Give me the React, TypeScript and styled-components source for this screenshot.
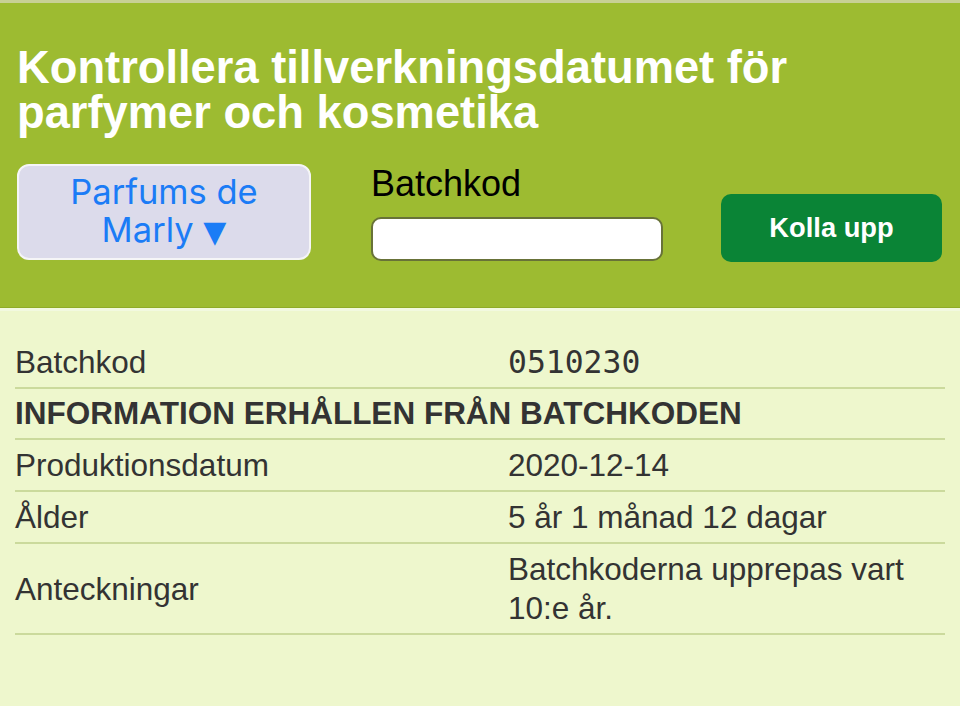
import React from 'react';
import styled, { createGlobalStyle } from 'styled-components';

const GlobalStyle = createGlobalStyle`
  html, body {
    margin: 0;
    padding: 0;
    background-color: #eef7cd;
  }
  body {
    font-family: "Liberation Sans", Arial, sans-serif;
    color: #333333;
  }
`;

const Page = styled.div`
  min-height: 706px;
  background-color: #eef7cd;
`;

const Header = styled.header`
  background-color: #9dbb31;
  border-top: 3px solid #c8d096;
  border-bottom: 1px solid #8fab28;
  padding: 42px 18px 47px 17px;
`;

const Title = styled.h1`
  margin: 0 0 28px 0;
  font-size: 45.3px;
  line-height: 45px;
  font-weight: bold;
  color: #ffffff;
`;

const FormRow = styled.div`
  display: flex;
  align-items: flex-end;
`;

const BrandSelect = styled.button`
  width: 294px;
  height: 96px;
  margin-right: 60px;
  background-color: #dcdbeb;
  border: 2px solid #f5f5f7;
  border-radius: 12px;
  color: #1b7cf6;
  font-family: Inter, "Liberation Sans", sans-serif;
  font-size: 34.5px;
  line-height: 38px;
  text-align: center;
  padding: 0 16px;
  cursor: pointer;
`;

const Caret = styled.span`
  font-family: "DejaVu Sans", sans-serif;
  font-size: 30px;
`;

const Field = styled.div`
  display: flex;
  flex-direction: column;
  width: 292px;
  margin-right: 58px;
  margin-bottom: -1px;
`;

const Label = styled.label`
  font-size: 36px;
  color: #000000;
  margin-bottom: 12px;
`;

const Input = styled.input`
  box-sizing: border-box;
  height: 44px;
  width: 100%;
  background-color: #ffffff;
  border: 2px solid #687238;
  border-radius: 10px;
`;

const LookupButton = styled.button`
  width: 221px;
  height: 68px;
  margin-bottom: -2px;
  background-color: #0a8436;
  color: #ffffff;
  border: 0;
  border-radius: 10px;
  font-family: "Liberation Sans", Arial, sans-serif;
  font-weight: bold;
  font-size: 27.3px;
  cursor: pointer;
`;

const Results = styled.section`
  border-top: 3px solid #f2f9e0;
  padding: 27px 15px 0 15px;
`;

const Row = styled.div<{ $tall?: boolean }>`
  display: grid;
  grid-template-columns: 493px 1fr;
  border-bottom: 2px solid #cbda9c;
  padding: ${(p) => (p.$tall ? '6px 0 5px' : '5px 0')};
  align-items: center;
  font-size: 31.5px;
  line-height: 39px;
`;

const Heading = styled.div`
  grid-column: 1 / span 2;
  font-weight: bold;
`;

const Cell = styled.div<{ $mono?: boolean }>`
  font-family: ${(p) => (p.$mono ? '"DejaVu Sans Mono", "Liberation Mono", monospace' : 'inherit')};
  font-size: ${(p) => (p.$mono ? '31.4px' : 'inherit')};
`;

const rows = [
  { label: 'Produktionsdatum', value: '2020-12-14' },
  { label: 'Ålder', value: '5 år 1 månad 12 dagar' },
  { label: 'Anteckningar', value: 'Batchkoderna upprepas vart 10:e år.' },
];

const App = () => {
  return (
    <Page>
      <GlobalStyle />
      <Header>
        <Title>Kontrollera tillverkningsdatumet för parfymer och kosmetika</Title>
        <FormRow>
          <BrandSelect>
            Parfums de Marly <Caret>▼</Caret>
          </BrandSelect>
          <Field>
            <Label htmlFor="batch">Batchkod</Label>
            <Input id="batch" type="text" />
          </Field>
          <LookupButton>Kolla upp</LookupButton>
        </FormRow>
      </Header>
      <Results>
        <Row>
          <Cell>Batchkod</Cell>
          <Cell $mono>0510230</Cell>
        </Row>
        <Row>
          <Heading>INFORMATION ERHÅLLEN FRÅN BATCHKODEN</Heading>
        </Row>
        {rows.map((r) => (
          <Row key={r.label} $tall>
            <Cell>{r.label}</Cell>
            <Cell>{r.value}</Cell>
          </Row>
        ))}
      </Results>
    </Page>
  );
};

export default App;
